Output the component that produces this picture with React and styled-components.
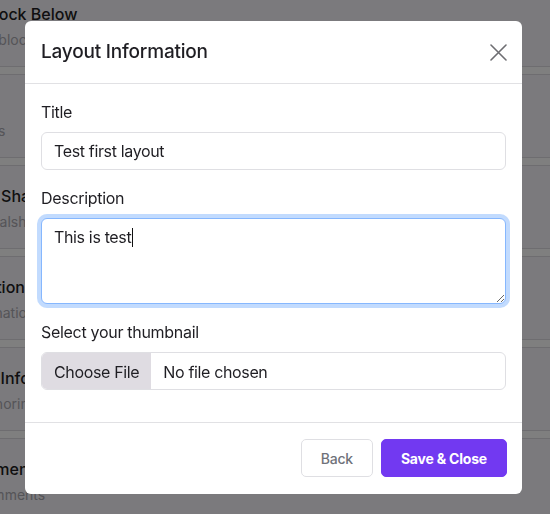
import React from 'react';
import styled, { createGlobalStyle } from 'styled-components';

const GlobalStyle = createGlobalStyle`
  html, body {
    margin: 0;
    padding: 0;
    background: #f6f5fa;
    font-family: Inter, "Liberation Sans", sans-serif;
    overflow: hidden;
  }
  * { box-sizing: border-box; }
`;

const PageList = styled.div`
  margin: -16px 0 0 -64px;
  width: 700px;
`;

const PageItem = styled.div`
  padding: 20px 0 16px;
  height: 82px;
`;

const PageItemTitle = styled.div`
  font-size: 16px;
  line-height: 20px;
  font-weight: 500;
  color: #1e1d22;
  white-space: nowrap;
`;

const PageItemText = styled.div`
  margin-top: 6px;
  font-size: 14px;
  line-height: 20px;
  color: #aaa8b0;
  white-space: nowrap;
`;

const PageBand = styled.div`
  height: 9px;
  background: #ffffff;
  border-top: 1px solid #dcdbe0;
  border-bottom: 1px solid #dcdbe0;
`;

const Backdrop = styled.div`
  position: fixed;
  inset: 0;
  background: rgba(0, 0, 0, 0.5);
`;

const Dialog = styled.div`
  width: 497px;
  margin: 21px 0 0 25px;
  background: #fff;
  border-radius: 6px;
  color: #212529;
`;

const DialogHeader = styled.div`
  height: 63px;
  padding: 0 15px 0 16px;
  display: flex;
  align-items: center;
  justify-content: space-between;
  border-bottom: 1px solid #e1e1e4;
`;

const DialogTitle = styled.h5`
  margin: 0;
  font-size: 19px;
  font-weight: 500;
  line-height: 24px;
  letter-spacing: -0.2px;
  color: #1f1e23;
`;

const CloseButton = styled.button`
  width: 17px;
  height: 24px;
  padding: 0;
  border: none;
  background: none;
  display: flex;
  align-items: center;
  justify-content: flex-end;
  cursor: pointer;
`;

const DialogBody = styled.div`
  padding: 16px;
`;

const Field = styled.div`
  margin-bottom: 16px;
`;

const Label = styled.label`
  display: block;
  margin-bottom: 8px;
  font-size: 16px;
  line-height: 24px;
  letter-spacing: -0.3px;
  color: #1f1e23;
`;

const controlStyles = `
  display: block;
  width: 100%;
  padding: 6px 12px;
  font-family: Inter, "Liberation Sans", sans-serif;
  font-size: 16px;
  line-height: 24px;
  letter-spacing: -0.35px;
  color: #1f1e23;
  background: #fff;
  border: 1px solid #dfdfe3;
  border-radius: 6px;
  outline: none;
`;

const TextInput = styled.input`
  ${controlStyles}
  height: 38px;
`;

const TextAreaWrap = styled.div`
  position: relative;
`;

const TextArea = styled.textarea`
  ${controlStyles}
  height: 86px;
  resize: vertical;
  border-color: ${props => props.$focused ? '#86b7fe' : '#dfdfe3'};
  box-shadow: ${props => props.$focused ? '0 0 0 4px rgba(13, 110, 253, 0.25)' : 'none'};
`;

const CaretLayer = styled.div`
  position: absolute;
  top: 1px;
  left: 1px;
  padding: 6px 12px;
  font-size: 16px;
  line-height: 24px;
  letter-spacing: -0.35px;
  color: transparent;
  pointer-events: none;
  white-space: pre;
`;

const Caret = styled.span`
  display: inline-block;
  width: 1px;
  height: 19px;
  margin-left: 1px;
  vertical-align: -4px;
  background: #111;
`;

const FileInput = styled.input`
  ${controlStyles}
  height: 38px;
  overflow: hidden;

  &::file-selector-button {
    height: 38px;
    padding: 6px 12px;
    margin: -6px 12px -6px -12px;
    font-family: Inter, "Liberation Sans", sans-serif;
    font-size: 16px;
    letter-spacing: -0.35px;
    color: #1f1e23;
    background: #dfdce2;
    border: 0;
    border-radius: 0;
  }
`;

const DialogFooter = styled.div`
  padding: 16px 15px 17px 16px;
  display: flex;
  justify-content: flex-end;
  gap: 8px;
  border-top: 1px solid #e1e1e4;
`;

const Button = styled.button`
  height: 38px;
  padding: 0 19px;
  font-family: Inter, "Liberation Sans", sans-serif;
  font-size: 14px;
  letter-spacing: -0.2px;
  font-weight: ${props => props.$primary ? 700 : 500};
  color: ${props => props.$primary ? '#fff' : '#6f727a'};
  background: ${props => props.$primary ? '#7239f1' : '#fff'};
  border: 1px solid ${props => props.$primary ? '#7239f1' : '#dfdfe3'};
  border-radius: 5px;
  cursor: pointer;
`;

const pageItems = [
  { title: 'Insert Block Below', text: 'Add new block' },
  { title: 'Grid', text: 'New items' },
  { title: 'Content Sharing', text: 'View socialshare' },
  { title: 'Set Caption', text: 'Use pagination' },
  { title: 'Contact Info', text: 'Adds authoring details' },
  { title: 'All Comments', text: 'Allow comments' },
];

const CloseIcon = () => (
  <svg width="17" height="17" viewBox="0 0 17 17">
    <path d="M1 1 L16 16 M16 1 L1 16" stroke="#6e6e72" strokeWidth="1.6" strokeLinecap="round" />
  </svg>
);

export default function App() {
  const description = 'This is test';

  return (
    <>
      <GlobalStyle />
      <PageList>
        {pageItems.map((item, i) => (
          <React.Fragment key={item.title}>
            <PageItem>
              <PageItemTitle>{item.title}</PageItemTitle>
              <PageItemText>{item.text}</PageItemText>
            </PageItem>
            {i < pageItems.length - 1 && <PageBand />}
          </React.Fragment>
        ))}
      </PageList>
      <Backdrop>
        <Dialog>
          <DialogHeader>
            <DialogTitle>Layout Information</DialogTitle>
            <CloseButton aria-label="Close"><CloseIcon /></CloseButton>
          </DialogHeader>
          <DialogBody>
            <Field>
              <Label>Title</Label>
              <TextInput type="text" defaultValue="Test first layout" />
            </Field>
            <Field>
              <Label>Description</Label>
              <TextAreaWrap>
                <TextArea $focused defaultValue={description} />
                <CaretLayer>{description}<Caret /></CaretLayer>
              </TextAreaWrap>
            </Field>
            <Field>
              <Label>Select your thumbnail</Label>
              <FileInput type="file" />
            </Field>
          </DialogBody>
          <DialogFooter>
            <Button>Back</Button>
            <Button $primary>Save &amp; Close</Button>
          </DialogFooter>
        </Dialog>
      </Backdrop>
    </>
  );
}
